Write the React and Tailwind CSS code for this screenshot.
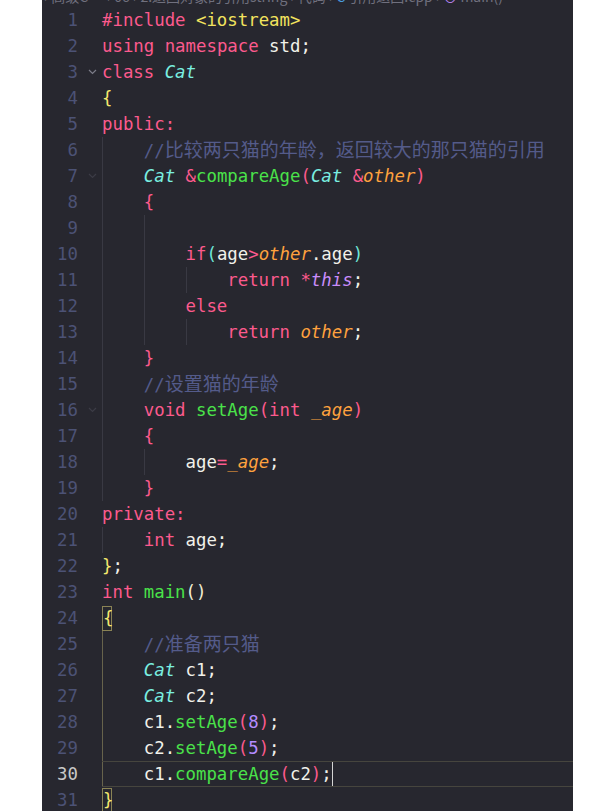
const K = 'text-[#fc5a8d]';
const T = 'text-[#7aeee0] italic';
const F = 'text-[#4ae24a]';
const S = 'text-[#f2e35e]';
const P = 'text-[#ffa23e] italic';
const N = 'text-[#b48cff]';
const TH = 'text-[#c98cfa] italic';
const W = 'text-[#f1f1ea]';
const Y = 'text-[#f6e96e]';
const B3 = 'text-[#6fe6d8]';

const lines = [
  { i: 0, t: [['#include ', K], ['<iostream>', S]] },
  { i: 0, t: [['using', K], [' ', W], ['namespace', K], [' std;', W]] },
  { i: 0, fold: 'on', t: [['class', K], [' ', W], ['Cat', T]] },
  { i: 0, t: [['{', Y]] },
  { i: 0, t: [['public:', K]] },
  { i: 1, c: '比较两只猫的年龄，返回较大的那只猫的引用' },
  { i: 1, fold: 'dim', t: [['Cat', T], [' ', W], ['&', K], ['compareAge', F], ['(', K], ['Cat', T], [' ', W], ['&', K], ['other', P], [')', K]] },
  { i: 1, t: [['{', K]] },
  { i: 2, t: [] },
  { i: 2, t: [['if', K], ['(', B3], ['age', W], ['>', K], ['other', P], ['.age', W], [')', B3]] },
  { i: 3, t: [['return', K], [' ', W], ['*', K], ['this', TH], [';', W]] },
  { i: 2, t: [['else', K]] },
  { i: 3, t: [['return', K], [' ', W], ['other', P], [';', W]] },
  { i: 1, t: [['}', K]] },
  { i: 1, c: '设置猫的年龄' },
  { i: 1, fold: 'dim', t: [['void', K], [' ', W], ['setAge', F], ['(', K], ['int', K], [' ', W], ['_age', P], [')', K]] },
  { i: 1, t: [['{', K]] },
  { i: 2, t: [['age', W], ['=', K], ['_age', P], [';', W]] },
  { i: 1, t: [['}', K]] },
  { i: 0, t: [['private:', K]] },
  { i: 1, t: [['int', K], [' age;', W]] },
  { i: 0, t: [['}', Y], [';', W]] },
  { i: 0, t: [['int', K], [' ', W], ['main', F], ['()', 'text-[#f3eed2]']] },
  { i: 0, box: '{' },
  { i: 1, active: true, c: '准备两只猫' },
  { i: 1, active: true, t: [['Cat', T], [' c1;', W]] },
  { i: 1, active: true, t: [['Cat', T], [' c2;', W]] },
  { i: 1, active: true, t: [['c1.', W], ['setAge', F], ['(', K], ['8', N], [')', K], [';', W]] },
  { i: 1, active: true, t: [['c2.', W], ['setAge', F], ['(', K], ['5', N], [')', K], [';', W]] },
  { i: 1, active: true, current: true, t: [['c1.', W], ['compareAge', F], ['(', K], ['c2', W], [')', K], [';', W]] },
  { i: 0, box: '}' },
];

function Chevron({ dim }) {
  return (
    <svg width="9" height="6" viewBox="0 0 9 6" fill="none">
      <path d="M1 1l3.5 3.5L8 1" stroke={dim ? '#3c3c46' : '#7c7c88'} strokeWidth="1.2" />
    </svg>
  );
}

function Line({ n, line }) {
  const guides = [];
  for (let g = 0; g < line.i; g++) {
    guides.push(
      <span
        key={g}
        className={
          'w-[4ch] shrink-0 border-l ' +
          (line.active ? 'border-[#67634c]' : 'border-[#393943]')
        }
      />
    );
  }
  return (
    <div className="flex h-[26px]">
      <div className={'w-[36px] text-right leading-[26px] ' + (line.current ? 'text-[#c9c9c9]' : 'text-[#4c5275]')}>
        {n}
      </div>
      <div className="w-[24px] flex items-center pl-[10px]">
        {line.fold && <Chevron dim={line.fold === 'dim'} />}
      </div>
      <div className={'flex-1 flex whitespace-pre ' + (line.current ? 'border-y border-[#46453e]' : '')}>
        {guides}
        <span className="self-center leading-[24px] flex items-center">
          {line.c && (
            <span className="text-[#545b8a]">
              //<span className="font-['Noto_Sans_CJK_SC',sans-serif] text-[19px]">{line.c}</span>
            </span>
          )}
          {line.box && (
            <span className="inline-block w-[1ch] h-[25px] leading-[23px] border border-[#8a8355] text-[#f6e96e] text-center">
              {line.box}
            </span>
          )}
          {line.t && line.t.map(([s, c], k) => (
            <span key={k} className={c}>{s}</span>
          ))}
          {line.current && <span className="inline-block w-[1.5px] h-[24px] bg-[#d4d4d4]" />}
        </span>
      </div>
    </div>
  );
}

export default function App() {
  return (
    <div className="min-h-[811px] bg-white flex">
      <div className="ml-[42px] w-[531px] h-[811px] bg-[#27272f] overflow-hidden font-['DejaVu_Sans_Mono',monospace] text-[17.35px]">
        <div className="h-[7px] overflow-hidden">
          <div className="-mt-[13px] pl-[2px] text-[14px] leading-[18px] text-[#70707e] font-['Noto_Sans_CJK_SC',sans-serif] whitespace-nowrap">
            › 高级C++ › 06 › 2.返回对象的引用string › 代码 › <span className="text-[#4a9ee0]">C</span> 引用返回.cpp › <span className="text-[#b07ee8]">⊙</span> main()
          </div>
        </div>
        {lines.map((line, idx) => (
          <Line key={idx} n={idx + 1} line={line} />
        ))}
      </div>
    </div>
  );
}
